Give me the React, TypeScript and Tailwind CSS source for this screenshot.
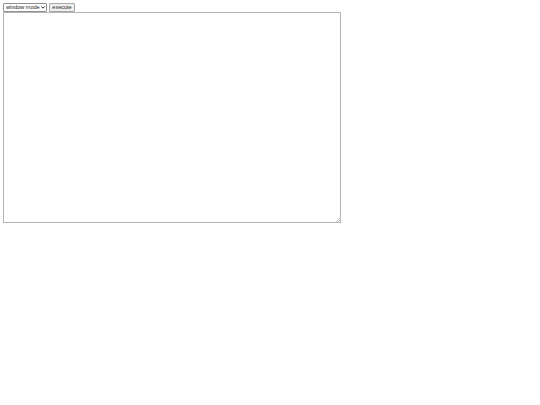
export default function App() {
  return (
    <div className="p-[3px] font-['Liberation_Sans',Arial,sans-serif] text-[6px] leading-none">
      <div className="flex items-center gap-[2px]">
        <div className="relative">
          <select className="block h-[9px] w-[44px] appearance-none rounded-[1px] border border-[#8f8f8f] bg-white pl-[2px] pr-[6px] text-[5.5px] leading-none text-[#222]">
            <option>window mode</option>
            <option>tab mode</option>
          </select>
          <svg
            className="pointer-events-none absolute right-[2px] top-[3px]"
            width="4"
            height="3"
            viewBox="0 0 4 3"
          >
            <path d="M0.4 0.4 L2 2.2 L3.6 0.4" fill="none" stroke="#222" strokeWidth="0.9" />
          </svg>
        </div>
        <button className="h-[9px] w-[26px] rounded-[1px] border border-[#a6a6a6] bg-[#efefef] text-[5.5px] leading-none text-[#222]">
          execute
        </button>
      </div>
      <div className="relative w-[338px]">
        <textarea className="block h-[211px] w-[338px] resize-none border border-[#b5b5b5] bg-white p-[2px] outline-none" />
        <svg
          className="pointer-events-none absolute bottom-[1px] right-[1px]"
          width="5"
          height="5"
          viewBox="0 0 5 5"
        >
          <path d="M5 1 L1 5 M5 3 L3 5" stroke="#aaa" strokeWidth="0.7" />
        </svg>
      </div>
    </div>
  );
}
